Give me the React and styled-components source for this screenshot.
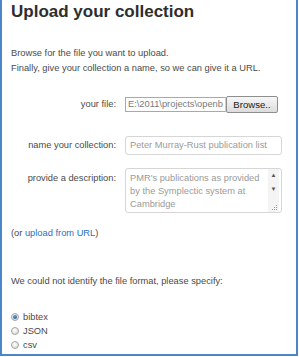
import React from 'react';
import styled, {createGlobalStyle} from "styled-components";

const GlobalStyle = createGlobalStyle`
    html, body {
        margin: 0;
        padding: 0;
        background: #ffffff;
    }
    body {
        font-family: "Liberation Sans", Arial, sans-serif;
        font-size: 9.3px;
        color: #4a4a4a;
    }
`;

const Frame = styled.div`
    box-sizing: border-box;
    width: 298px;
    height: 356px;
    padding: 0 9px;
    border: 2px solid #4a86c8;
    border-top: none;
    background: #ffffff;
    overflow: hidden;
`;

const Title = styled.h1`
    margin: 2px 0 0;
    font-size: 17px;
    line-height: 20px;
    font-weight: bold;
    color: #2e2e2e;
    white-space: nowrap;
`;

const Text = styled.p`
    margin: ${p => p.$mt || 0}px 0 0;
    line-height: 15px;
    white-space: nowrap;
`;

const Link = styled.a`
    color: #2a6fbf;
    text-decoration: none;
`;

const Row = styled.div`
    display: flex;
    align-items: ${p => (p.$top ? "flex-start" : "center")};
    margin-top: ${p => p.$mt}px;
`;

const Label = styled.label`
    width: 105px;
    margin-right: 9px;
    padding-top: ${p => p.$pt || 0}px;
    text-align: right;
    line-height: 13px;
    white-space: nowrap;
`;

const FileBox = styled.div`
    box-sizing: border-box;
    width: 101px;
    height: 15px;
    padding: 0 2px;
    border: 1px solid #a9a9a9;
    border-right-color: #cfcfcf;
    background: #ffffff;
    color: #7a7a7a;
    line-height: 13px;
    white-space: nowrap;
    overflow: hidden;
`;

const BrowseButton = styled.button`
    box-sizing: border-box;
    width: 52px;
    height: 17px;
    padding: 0;
    border: 1px solid #8e8e8e;
    border-radius: 2px;
    background: linear-gradient(#f7f7f7, #dcdcdc);
    font-family: "Liberation Sans", Arial, sans-serif;
    font-size: 9.6px;
    color: #1a1a1a;
`;

const TextInput = styled.div`
    box-sizing: border-box;
    width: 157px;
    height: 19px;
    padding: 0 4px;
    border: 1px solid #d6d6d6;
    border-radius: 3px;
    color: #9a9a9a;
    line-height: 17px;
    white-space: nowrap;
    overflow: hidden;
`;

const TextArea = styled.div`
    box-sizing: border-box;
    display: flex;
    width: 157px;
    height: 45px;
    border: 1px solid #d6d6d6;
    border-radius: 3px;
    color: #9a9a9a;
    overflow: hidden;
`;

const AreaText = styled.div`
    flex: 1;
    padding: 3px 0 0 4px;
    line-height: 13px;
    white-space: nowrap;
`;

const ScrollBar = styled.div`
    display: flex;
    flex-direction: column;
    align-items: center;
    width: 11px;
    margin-right: 2px;
    background: #f4f4f4;
    color: #555555;
    font-size: 6px;
`;

const Arrow = styled.span`
    height: 8px;
    line-height: 8px;
    margin-top: ${p => p.$mt || 0}px;
`;

const Grip = styled.svg`
    margin-top: auto;
    margin-left: 3px;
    margin-bottom: 1px;
`;

const RadioList = styled.div`
    margin-top: 21px;
`;

const RadioRow = styled.label`
    display: flex;
    align-items: center;
    height: 14px;
    line-height: 14px;
`;

const Radio = styled.span`
    box-sizing: border-box;
    display: inline-flex;
    align-items: center;
    justify-content: center;
    width: 8px;
    height: 8px;
    margin-right: 4px;
    border: 1px solid #a4a4a4;
    border-radius: 50%;
    background: radial-gradient(circle at 40% 35%, #ffffff, #d4d4d4);

    &::after {
        content: "";
        display: ${p => (p.$checked ? "block" : "none")};
        width: 4px;
        height: 4px;
        border-radius: 50%;
        background: radial-gradient(circle at 40% 35%, #5b9ad6, #1d4f86);
    }
`;

const formats = [
    {name: "bibtex", checked: true},
    {name: "JSON"},
    {name: "csv"},
];

const App = () => {
    return (
        <Frame>
            <GlobalStyle />
            <Title>Upload your collection</Title>
            <Text $mt={24}>
                Browse for the file you want to upload.<br />
                Finally, give your collection a name, so we can give it a URL.
            </Text>

            <Row $mt={20}>
                <Label>your file:</Label>
                <FileBox>E:\2011\projects\openb</FileBox>
                <BrowseButton>Browse..</BrowseButton>
            </Row>

            <Row $mt={23}>
                <Label>name your collection:</Label>
                <TextInput>Peter Murray-Rust publication list</TextInput>
            </Row>

            <Row $mt={13} $top>
                <Label $pt={4}>provide a description:</Label>
                <TextArea>
                    <AreaText>
                        PMR's publications as provided<br />
                        by the Symplectic system at<br />
                        Cambridge
                    </AreaText>
                    <ScrollBar>
                        <Arrow $mt={2}>▲</Arrow>
                        <Arrow $mt={6}>▼</Arrow>
                        <Grip width="6" height="6" viewBox="0 0 6 6">
                            <rect x="4" y="0" width="1" height="1" fill="#999" />
                            <rect x="2" y="2" width="1" height="1" fill="#999" />
                            <rect x="4" y="2" width="1" height="1" fill="#999" />
                            <rect x="0" y="4" width="1" height="1" fill="#999" />
                            <rect x="2" y="4" width="1" height="1" fill="#999" />
                            <rect x="4" y="4" width="1" height="1" fill="#999" />
                        </Grip>
                    </ScrollBar>
                </TextArea>
            </Row>

            <Text $mt={13}>
                (or <Link href="#">upload from URL</Link>)
            </Text>

            <Text $mt={33}>We could not identify the file format, please specify:</Text>

            <RadioList>
                {formats.map(f => (
                    <RadioRow key={f.name}>
                        <Radio $checked={f.checked} />
                        {f.name}
                    </RadioRow>
                ))}
            </RadioList>
        </Frame>
    );
};

export default App;
